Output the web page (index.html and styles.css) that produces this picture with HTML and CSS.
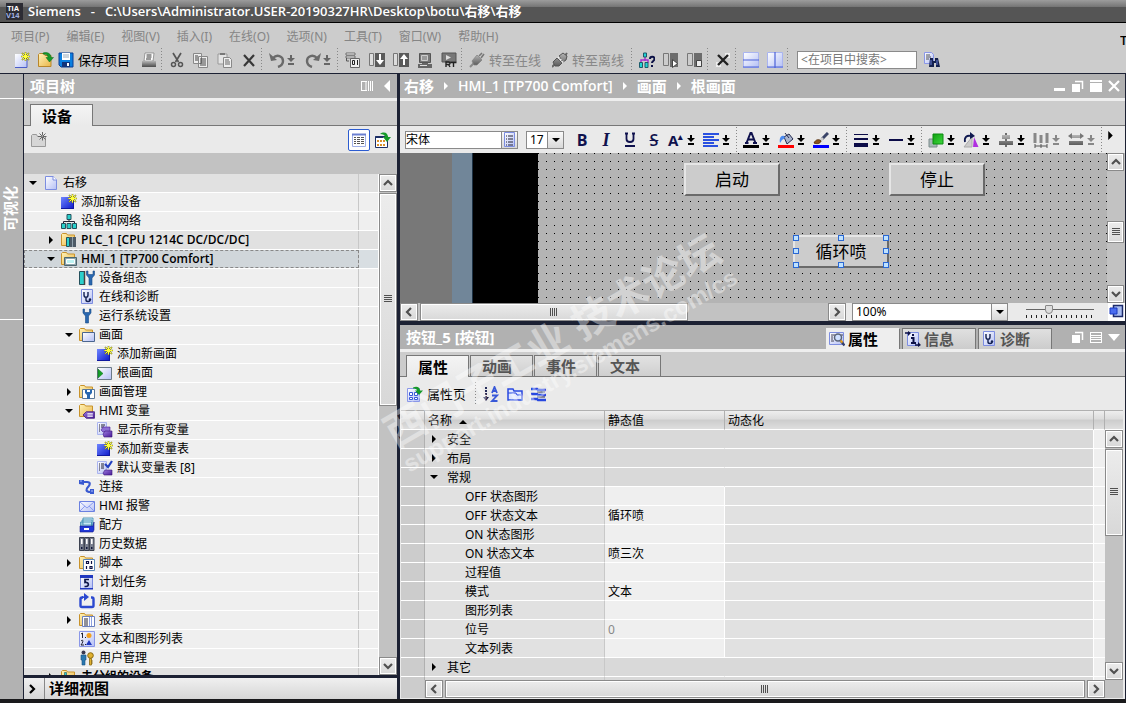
FILE: index.html
```html
<!DOCTYPE html>
<html lang="zh-CN">
<head>
<meta charset="utf-8">
<title>Siemens - 右移</title>
<link rel="stylesheet" href="styles.css">
</head>
<body>
<svg class="sprite" aria-hidden="true">
  <defs>
    <linearGradient id="g-blue" x1="0" y1="0" x2="1" y2="1"><stop offset="0" stop-color="#fff"/><stop offset="1" stop-color="#b4bff5"/></linearGradient>
    <linearGradient id="g-deep" x1="0" y1="0" x2="1" y2="1"><stop offset="0" stop-color="#6f86ff"/><stop offset="1" stop-color="#0a16c8"/></linearGradient>
    <linearGradient id="g-fold" x1="0" y1="0" x2="1" y2="1"><stop offset="0" stop-color="#fff3b8"/><stop offset="1" stop-color="#eab548"/></linearGradient>
    <linearGradient id="g-gray" x1="0" y1="0" x2="0" y2="1"><stop offset="0" stop-color="#b5b5b5"/><stop offset="1" stop-color="#5c5c5c"/></linearGradient>
    <linearGradient id="g-violet" x1="0" y1="0" x2="1" y2="1"><stop offset="0" stop-color="#9a7be0"/><stop offset="1" stop-color="#4a1a96"/></linearGradient>
    <linearGradient id="g-green" x1="0" y1="0" x2="1" y2="1"><stop offset="0" stop-color="#10a010"/><stop offset="1" stop-color="#3fd83f"/></linearGradient>
  </defs>
  <symbol id="star" viewBox="0 0 9 9"><path d="M4.500 0v9M0 4.500h9M1 1l7 7M8 1l-7 7" stroke="#7d7d10" stroke-width="1.600"/><path d="M4.500 .5v8M.5 4.500h8M1.500 1.500l6 6M7.500 1.500l-6 6" stroke="#ffff3c"/></symbol>
  <symbol id="new" viewBox="0 0 16 16"><path d="M1 2h9l3 3v11H1z" fill="url(#g-blue)"/><path d="M13 6v9.500H1" fill="none" stroke="#4a5cc8"/><use href="#star" x="7" y="0" width="9" height="9"/></symbol>
  <symbol id="open" viewBox="0 0 16 16"><path d="M.5 14.500V2.500l1-1h4l1.500 2h6v11z" fill="url(#g-fold)" stroke="#b8862b"/><path d="M5 1c5-1.500 8 1 8 4.500h2.500L11.500 10 8 5.500h2C10 3 8 2 5 2z" fill="#159a28" stroke="#0c6a1a" stroke-width=".5"/></symbol>
  <symbol id="save" viewBox="0 0 16 16"><path d="M1 1h14v14H3l-2-2z" fill="#0b7fe0" stroke="#0a3f96"/><path d="M4 1h8v7H4z" fill="#fff"/><path d="M5 3h6M5 5h6" stroke="#9ab"/><path d="M4 10h8v5H4z" fill="#12337a"/><path d="M9 11h2v3H9z" fill="#fff"/></symbol>
  <symbol id="print" viewBox="0 0 16 16"><path d="M4 1h9l-1 8H3z" fill="#fff" stroke="#777" stroke-width=".7"/><path d="M5.500 3h5M5.500 5h5M5 7h5" stroke="#333"/><path d="M1 9h14v5H1z" fill="url(#g-gray)"/><path d="M1 14.500h14" stroke="#555"/></symbol>
  <symbol id="cut" viewBox="0 0 16 16"><path d="M4 1l5.500 9M12 1L6.500 10" stroke="#555" stroke-width="1.700"/><circle cx="4.500" cy="12.500" r="2" fill="none" stroke="#555" stroke-width="1.500"/><circle cx="11.500" cy="12.500" r="2" fill="none" stroke="#555" stroke-width="1.500"/></symbol>
  <symbol id="copy" viewBox="0 0 16 16"><path d="M.5 1.500h8v10h-8zM5.500 4.500h9v11h-9z" fill="#eee" stroke="#888"/><path d="M2 4h3M2 6h3M2 8h3M7 7h6M7 9h6M7 11h6M7 13h6" stroke="#444"/></symbol>
  <symbol id="paste" viewBox="0 0 16 16"><path d="M1 2h9v10H1z" fill="#e4e4e4" stroke="#999"/><path d="M3 1h5v2H3z" fill="#777"/><path d="M6.500 5.500h6l2 2v8h-8z" fill="#eee" stroke="#888"/><path d="M8 8h4M8 10h5M8 12h5" stroke="#666"/></symbol>
  <symbol id="del" viewBox="0 0 16 16"><path d="M3 3l10 11M13 3L3 14" stroke="#383838" stroke-width="2.200"/></symbol>
  <symbol id="undo" viewBox="0 0 16 16"><path d="M4 6c4-4 10-2 10 3 0 3-2 5-5 6" fill="none" stroke="#6a6a6a" stroke-width="2.400"/><path d="M0 1l2 8 6-1z" fill="#6a6a6a"/></symbol>
  <symbol id="redo" viewBox="0 0 16 16"><path d="M12 6C8 2 2 4 2 9c0 3 2 5 5 6" fill="none" stroke="#6a6a6a" stroke-width="2.400"/><path d="M16 1l-2 8-6-1z" fill="#6a6a6a"/></symbol>
  <symbol id="dn" viewBox="0 0 8 10"><path d="M3 0h2v3h3L4 7 0 3h3zM1 8h6v2H1z" fill="currentColor"/></symbol>
  <symbol id="compile" viewBox="0 0 16 16"><path d="M1 1h9v2H1zM1 4h9v2H1z" fill="#eee" stroke="#555" stroke-width=".8"/><path d="M1.500 6v3H4" stroke="#555" fill="none"/><path d="M5.500 6.500h9v9h-9z" fill="#eee" stroke="#666"/><path d="M7.500 8.500h2v4h-2zM12.500 8v5" fill="none" stroke="#222"/></symbol>
  <symbol id="download" viewBox="0 0 16 16"><path d="M.5 1.500h4v12h-4z" fill="#ddd" stroke="#777"/><path d="M6 1h10v14H6z" fill="#5a5a5a"/><path d="M11 2v7" stroke="#fff" stroke-width="2"/><path d="M7 8h8l-4 5z" fill="#fff"/></symbol>
  <symbol id="upload" viewBox="0 0 16 16"><path d="M.5 1.500h4v12h-4z" fill="#ddd" stroke="#777"/><path d="M6 1h10v14H6z" fill="#5a5a5a"/><path d="M11 13V7" stroke="#fff" stroke-width="2"/><path d="M7 7h8l-4-5z" fill="#fff"/></symbol>
  <symbol id="sim" viewBox="0 0 16 16"><path d="M2.500 1.500h11v9h-11z" fill="#777" stroke="#555"/><path d="M4.500 3.500h6v5h-6z" fill="#999" stroke="#ccc"/><path d="M5 11h6v1h4v4H1v-4h4z" fill="#666"/><path d="M3 13.500h7" stroke="#ddd"/></symbol>
  <symbol id="rt" viewBox="0 0 16 16"><path d="M1 1h14v9H1z" fill="#777" stroke="#555"/><path d="M5 3l5 2.500L5 8z" fill="#ddd"/><path d="M5 15V10h2.500c2 0 2 2.500 0 2.500H5M7.500 12.500L9 15M9.500 10.500h6M12.500 10.500V15" fill="none" stroke="#222" stroke-width="1.400"/></symbol>
  <symbol id="plug" viewBox="0 0 16 16"><path d="M1 15l5-5" stroke="#8a8a8a" stroke-width="2"/><path d="M3 9l5-6 5 5-5 5H5z" fill="url(#g-gray)" stroke="#808080" stroke-width=".7"/><path d="M10 4l3-3M12 6l3-4" stroke="#777" stroke-width="1.600"/></symbol>
  <symbol id="unplug" viewBox="0 0 16 16"><path d="M0 15l4-4M12 5l3-4" stroke="#666" stroke-width="2"/><path d="M1 10l4-4 5 5-3 3H3zM7 4l4-3 4 3-1 4-3 2z" fill="url(#g-gray)" stroke="#555"/><path d="M6 5l5 5" stroke="#eee" stroke-dasharray="1.500 1.500" stroke-width="2"/></symbol>
  <symbol id="access" viewBox="0 0 16 16"><path d="M6 4v5M2 11V8h7v3" fill="none" stroke="#a12fd0" stroke-width="1.400"/><path d="M4.500 1h3v4h-3zM.5 10.500h3v5h-3zM6 10.500h3v5H6z" fill="#1fd3d3" stroke="#1d5a6a"/><path d="M11 7c0-3 4.500-3 4.500 0 0 2-2.500 2-2.500 4M13 13v2" fill="none" stroke="#0c1146" stroke-width="2"/></symbol>
  <symbol id="start" viewBox="0 0 16 16"><path d="M.5 1.500h5v12h-5z" fill="#ccc" stroke="#777"/><path d="M7 1h8v14H7z" fill="#6c6c6c"/><path d="M9.500 7.500l5 4-5 4z" fill="#fff" stroke="#444"/></symbol>
  <symbol id="stop" viewBox="0 0 16 16"><path d="M.5 1.500h5v12h-5z" fill="#ccc" stroke="#777"/><path d="M7 1h8v14H7z" fill="#6c6c6c"/><path d="M9.500 8.500h5v6h-5z" fill="#eee" stroke="#444"/></symbol>
  <symbol id="xref" viewBox="0 0 16 16"><path d="M9.500.5h6v6h-6zM.5 9.500h6v6h-6z" fill="#eee" stroke="#ccc"/><path d="M3 3l10 10M13 3L3 13" stroke="#222" stroke-width="2.400"/></symbol>
  <symbol id="split-h" viewBox="0 0 16 16"><path d="M.5.5h15v15H.5z" fill="url(#g-blue)" stroke="#a9b4f0"/><path d="M0 8h16M0 15h16" stroke="#4c62d8" stroke-width="1.200"/></symbol>
  <symbol id="split-v" viewBox="0 0 16 16"><path d="M.5.5h15v15H.5z" fill="url(#g-blue)" stroke="#a9b4f0"/><path d="M8 0v16M0 15h16" stroke="#4c62d8" stroke-width="1.200"/></symbol>
  <symbol id="find" viewBox="0 0 16 16"><path d="M.5.5h7l2 2v9h-9z" fill="url(#g-blue)" stroke="#8a97e8"/><path d="M2 3h4M2 5h5M2 7h3" stroke="#555"/><path d="M6 6h3v3h2V6h3l2 9h-4v-4h-2v4H5z" fill="#14204e"/><path d="M7 8v5M13 8v5" stroke="#6a80d8"/></symbol>
  <symbol id="folder" viewBox="0 0 16 16"><path d="M.5 13.500V2.500l1-1h4l1 1.500h7v10.500z" fill="url(#g-fold)" stroke="#c8922b"/></symbol>
  <symbol id="folder-new" viewBox="0 0 16 16"><path d="M.5 14.500v-11l1-1h4l1 2h8v10z" fill="#d6d6d6" stroke="#999"/><path d="M11.500 0v9M7 4.500h9M8.500 1.500l6 6M14.500 1.500l-6 6" stroke="#666" stroke-dasharray="3.500 1.500"/></symbol>
  <symbol id="list" viewBox="0 0 16 16"><path d="M1.500 2.500h13v12h-13z" fill="#fff" stroke="#9fb0e8"/><path d="M1 2.500h14" stroke="#6a7fd0" stroke-width="2"/><path d="M3 5.500h2M6 5.500h3M10 5.500h3M3 7.500h2M6 7.500h3M10 7.500h3M3 9.500h2M6 9.500h3M10 9.500h3M3 11.500h2M6 11.500h3M10 11.500h3" stroke="#555"/></symbol>
  <symbol id="export" viewBox="0 0 16 16"><path d="M.5 4.500h12v11H.5z" fill="#fff" stroke="#1d2f66"/><path d="M.5 5h8" stroke="#1d2f66" stroke-width="2"/><path d="M2 8h2v2H2zM5 8h2v2H5zM8 8h2v2H8zM2 12h2v2H2zM5 12h2v2H5zM8 12h2v2H8z" fill="#d9902a"/><path d="M5 2c4-3 8-1 8 3h3l-4 5-4-5h2c0-2-2-3-5-3z" fill="#159a28"/></symbol>
  <symbol id="page" viewBox="0 0 16 16"><path d="M2.500 1.500h8l3 3v10h-11z" fill="url(#g-blue)" stroke="#7c8de0"/><path d="M10 1v4h4" fill="#fff" stroke="#7c8de0"/></symbol>
  <symbol id="add" viewBox="0 0 16 16"><path d="M0 3h13v12H0z" fill="url(#g-deep)"/><path d="M0 14.500h12.500V4" fill="none" stroke="#1018a0"/><use href="#star" x="7" y="0" width="9" height="9"/></symbol>
  <symbol id="net" viewBox="0 0 16 16"><path d="M8 5v4M2.500 11V8.500h11V11" fill="none" stroke="#223"/><path d="M6 1.500h4v5H6zM.5 10.500h4v5h-4zM6 10.500h4v5H6zM11.500 10.500h4v5h-4z" fill="#2ad0cc" stroke="#24505c"/></symbol>
  <symbol id="plc" viewBox="0 0 16 16"><use href="#folder" width="16" height="16"/><path d="M5.500 5.500h3v9h-3z" fill="#2ad0cc" stroke="#24505c"/><path d="M9 5h6v10H9z" fill="#4d5a66"/><path d="M11.500 5v10" stroke="#8fa0ac"/></symbol>
  <symbol id="hmi" viewBox="0 0 16 16"><use href="#folder" width="16" height="16"/><path d="M3.500 6.500h12v8h-12z" fill="#8ba4ac" stroke="#4c6670"/><path d="M5.500 8.500h8v4h-8z" fill="#bff4f4" stroke="#fff"/></symbol>
  <symbol id="wrench" viewBox="0 0 16 16"><path d="M4 1v4l2.500 3v7h3V8L12 5V1h-1.500v3.500h-5V1z" fill="#2a68b0" stroke="#174a88" stroke-width=".6"/></symbol>
  <symbol id="config" viewBox="0 0 16 16"><path d="M.5 1.500h5v13h-5z" fill="#2ad0cc" stroke="#24505c"/><path d="M5.500 1v14" stroke="#444" stroke-width="1.500"/><use href="#wrench" x="3.500" width="16" height="16"/></symbol>
  <symbol id="diag" viewBox="0 0 16 16"><path d="M2.500.5h11v14h-11z" fill="url(#g-blue)" stroke="#7c8de0"/><path d="M5 3v3c0 3 4 3 4 0V3M7 8v3c0 2 4 2 4 0" fill="none" stroke="#122050" stroke-width="1.400"/><circle cx="11" cy="10.500" r="1.200" fill="#122050"/></symbol>
  <symbol id="screens" viewBox="0 0 16 16"><use href="#folder" width="16" height="16"/><path d="M3.500 5.500h12v9h-12z" fill="url(#g-blue)" stroke="#4b6690"/></symbol>
  <symbol id="screen" viewBox="0 0 16 16"><path d="M.5 2.500h14v12H.5z" fill="url(#g-blue)" stroke="#6b7a88"/><path d="M1 4l5 4.500L1 13z" fill="#15a028" stroke="#0c6a1a" stroke-width=".5"/></symbol>
  <symbol id="manage" viewBox="0 0 16 16"><use href="#folder" width="16" height="16"/><path d="M3.500 5.500h12v9h-12z" fill="#fff" stroke="#5b7898"/><path d="M6 6v3l2 2v4h3v-4l2-2V6h-2v2H8V6z" fill="#2a68b0"/></symbol>
  <symbol id="tag" viewBox="0 0 11 7"><path d="M0 3.500L3 .5h7.500v6H3z" fill="url(#g-violet)" stroke="#3a1478" stroke-width=".7"/><path d="M4 2.500h5M4 4.500h5" stroke="#fff"/></symbol>
  <symbol id="tags" viewBox="0 0 16 16"><use href="#folder" width="16" height="16"/><use href="#tag" x="4" y="8" width="12" height="8"/></symbol>
  <symbol id="alltags" viewBox="0 0 16 16"><path d="M.5.5h9v12h-9z" fill="url(#g-blue)" stroke="#aab4f0"/><path d="M2 3h1M4 3h4M2 5h1M4 5h3M2 7h1M2 9h1" stroke="#223"/><path d="M4 8l2-3h7v5H6z" fill="#8c6fd4" stroke="#4a1a96" stroke-width=".6"/><path d="M6 12l2-3h7v6H7z" fill="url(#g-violet)" stroke="#3a1478" stroke-width=".6"/></symbol>
  <symbol id="deftags" viewBox="0 0 16 16"><path d="M.5 1.500h9v12h-9z" fill="url(#g-blue)" stroke="#aab4f0"/><path d="M2 4h1M4 4h3M2 6h1M4 6h3M2 8h1M4 8h3M2 10h1" stroke="#223"/><path d="M8 4l3 3 4-6" fill="none" stroke="#2340c0" stroke-width="2.200"/><path d="M6 13l2-3h7v5H7z" fill="url(#g-violet)" stroke="#3a1478" stroke-width=".6"/></symbol>
  <symbol id="link" viewBox="0 0 16 16"><path d="M4 3h4c4 0 3 3 1 5s-3 5 3 5" fill="none" stroke="#3a5ad0" stroke-width="2.200"/><path d="M0 1h5v5l-5-1zM11 10h4v5h-4z" fill="#3a5ad0"/><path d="M1 2h2M12 12h2" stroke="#a8bcff"/></symbol>
  <symbol id="mail" viewBox="0 0 16 16"><path d="M.5 3.500h15v10H.5z" fill="url(#g-blue)" stroke="#6a80e0"/><path d="M1 4l7 6 7-6M1 13l5-5M15 13l-5-5" fill="none" stroke="#8a9cf0"/></symbol>
  <symbol id="recipe" viewBox="0 0 16 16"><path d="M4 1h10v7H4zM3 3h10v7H3zM1.500 5h11v5h-11z" fill="#c8e8f4" stroke="#3a8ab0" stroke-width=".8"/><path d="M1 9h13l1-4v8l-1 2H1z" fill="#2038d8" stroke="#10188a" stroke-width=".6"/><path d="M5 11h5v2H5z" fill="#fff"/></symbol>
  <symbol id="history" viewBox="0 0 16 16"><path d="M.5 1.500h4.500v13H.5zM5.500 1.500H10v13H5.500zM10.500 1.500h4.500v13h-4.500z" fill="#7a8090" stroke="#3c4250"/><path d="M2.800 3v5M7.800 3v5M12.800 3v5" stroke="#fff" stroke-width="1.600"/><path d="M2 11h1.500v2H2zM7 11h1.500v2H7zM12 11h1.500v2H12z" fill="#10183c"/></symbol>
  <symbol id="script" viewBox="0 0 16 16"><use href="#folder" width="16" height="16"/><path d="M4.500 4.500h11v11h-11z" fill="#fff" stroke="#5b88b8"/><path d="M7.500 6.500h2v2h-2zM12.500 6v3M7.500 11v3M11 11.500h2v2h-2z" fill="none" stroke="#0c1146" stroke-width="1.200"/></symbol>
  <symbol id="task" viewBox="0 0 16 16"><path d="M1.500 1.500h12v13h-12z" fill="url(#g-blue)" stroke="#7c8de0"/><path d="M1 1h13v3H1zM1 14h13v1.500H1z" fill="#2038c0"/><path d="M10 5.500H6v3c4-1 4.500 4 1 4H5.500" fill="none" stroke="#10184a" stroke-width="1.700"/></symbol>
  <symbol id="cycle" viewBox="0 0 16 16"><path d="M4 4.500H3c-1 0-1.500.5-1.500 1.500v6.500c0 1 .5 1.500 1.500 1.500h10c1 0 1.500-.5 1.500-1.500V6c0-1-.5-1.500-1.500-1.500h-1" fill="none" stroke="#2a48d0" stroke-width="2.400"/><path d="M5 3.500V0l5 4-5 4V5H3V3z" fill="#2a48d0"/></symbol>
  <symbol id="report" viewBox="0 0 16 16"><use href="#folder" width="16" height="16"/><path d="M3.500 4.500h12v10h-12z" fill="#fff" stroke="#6a80c0"/><path d="M5 7h4M5 9h4M5 11h4M5 13h4" stroke="#223"/><path d="M10.500 5v9M12.500 5v9" stroke="#8ea0e0"/></symbol>
  <symbol id="textlist" viewBox="0 0 16 16"><path d="M.5.5h15v15H.5z" fill="url(#g-blue)" stroke="#8a97e8"/><path d="M2 3l1.500-1v5M2 10c2-2 3 0 0 4h3" fill="none" stroke="#223"/><path d="M6 6h1v1H6zM6 13h1v1H6z" fill="#223"/><circle cx="10" cy="4.500" r="2.500" fill="#f2a020"/><path d="M7 14l3-5 3 5z" fill="#2038c0"/></symbol>
  <symbol id="user" viewBox="0 0 16 16"><circle cx="4.500" cy="2.500" r="2" fill="#3a3a50"/><path d="M2 5h5v5H6v5H3v-5H2z" fill="#2a78b0" stroke="#1a5080" stroke-width=".6"/><circle cx="11.500" cy="5.500" r="2.800" fill="#e0b030" stroke="#8a6a10"/><path d="M10.500 8.500h2V15h-2zM12 11h2M12 13h2" fill="#e0b030" stroke="#8a6a10" stroke-width=".8"/></symbol>
  <symbol id="ungrouped" viewBox="0 0 16 16"><use href="#folder" width="16" height="16"/><path d="M3.500 3.500h2v9h-2z" fill="#2ad0cc" stroke="#24505c" stroke-width=".6"/></symbol>
  <symbol id="fmt-u" viewBox="0 0 16 16"><path d="M4.500 1v6c0 4 7 4 7 0V1M3 1.500h3M10 1.500h3M3 14h10" fill="none" stroke="#10124e" stroke-width="1.800"/></symbol>
  <symbol id="fmt-al" viewBox="0 0 16 16"><path d="M0 2h16M0 5h11M0 8h16M0 11h11M0 14h15" stroke="#2a50e0" stroke-width="2"/></symbol>
  <symbol id="fmt-color" viewBox="0 0 16 16"><path d="M3.500 11L7.500 1h1l4 10M4.500 7.500h7M2 11H5.500M10 11h4" fill="none" stroke="#10124e" stroke-width="2"/><path d="M0 13h16v3H0z"/></symbol>
  <symbol id="fmt-fill" viewBox="0 0 16 16"><path d="M6 5l5-3 4 5-6 5z" fill="#aab4cc" stroke="#222a50"/><path d="M7 1l4 5" stroke="#222a50"/><path d="M6 4C3 3 1 6 2 11l2-3 3-2z" fill="#4a8af0"/><path d="M0 13h16v3H0z" fill="#f00"/></symbol>
  <symbol id="fmt-brush" viewBox="0 0 16 16"><path d="M15 1L9 7" stroke="#3a4468" stroke-width="3"/><path d="M9 5l2 2-3 3-2-2z" fill="#ccc"/><path d="M1 11c2-4 5-4 7-2-1 3-4 3-7 2z" fill="#8a5420" stroke="#5c3410"/><path d="M0 13h16v3H0z" fill="#00f"/></symbol>
  <symbol id="fmt-lines" viewBox="0 0 16 16"><path d="M1 2.500h14" stroke="#0c0c48"/><path d="M1 7h14" stroke="#0c0c48" stroke-width="2"/><path d="M1 13h14" stroke="#0c0c48" stroke-width="4"/></symbol>
  <symbol id="fmt-line" viewBox="0 0 16 16"><path d="M1 8h14" stroke="#0c0c48" stroke-width="2"/></symbol>
  <symbol id="fmt-order" viewBox="0 0 16 16"><path d="M1 7h8v8H1z" fill="#a8b8b8" stroke="#7c8c8c"/><path d="M5 2h10v10H5z" fill="url(#g-green)" stroke="#0a8a10"/></symbol>
  <symbol id="fmt-rot" viewBox="0 0 16 16"><path d="M9 5v10H1z" fill="#ccc" stroke="#aaa"/><path d="M11 5l4.500 10H10z" fill="#b030e0"/><path d="M2 10C1 5 4 3 8 4" fill="none" stroke="#101a50" stroke-width="1.800"/><path d="M7 0l5 4-5 3z" fill="#101a50"/></symbol>
  <symbol id="fmt-align2" viewBox="0 0 16 16"><path d="M8 1v14" stroke="#444" stroke-width="1.500"/><path d="M4 3h8v4H4zM1 9h14v4H1z" fill="url(#g-gray)"/></symbol>
  <symbol id="fmt-dist" viewBox="0 0 16 16"><path d="M2 1v10M8 3v8M14 1v10" stroke="#888" stroke-width="3"/><path d="M2 14h12M2 12v4M8 12v4M14 12v4" stroke="#555"/></symbol>
  <symbol id="fmt-size" viewBox="0 0 16 16"><path d="M0 4l4-3v6zM16 4l-4-3v6z" fill="#777"/><path d="M4 3h8v3H4zM1 9h14v4H1z" fill="url(#g-gray)"/></symbol>
  <symbol id="combo" viewBox="0 0 16 16"><path d="M2.500.5h10v14h-10z" fill="url(#g-blue)" stroke="#7c8de0"/><path d="M4 4h1M6 4h5M4 7h1M6 7h5M4 10h1M6 10h5M4 13h1M6 13h5" stroke="#223"/></symbol>
  <symbol id="page-exp" viewBox="0 0 16 16"><path d="M.5 2.500h12v13H.5z" fill="url(#g-blue)" stroke="#8a97e8"/><path d="M2.500 6.500h3v3h-3zM7.500 6.500h3v3h-3zM2.500 11.500h3v2h-3zM7.500 11.500h3v2h-3z" fill="#fff" stroke="#3858d8"/><path d="M6 1.500c4-2 7 0 7 3h3l-4 4.500-4-4.500h2c0-1.500-2-2-4-2z" fill="#159a28"/></symbol>
  <symbol id="sort" viewBox="0 0 16 16"><path d="M3 1v11" stroke="#10184a" stroke-width="1.800" stroke-dasharray="2 1"/><path d="M0 11h6l-3 4z" fill="#10184a"/><path d="M9 7l2.500-6L14 7M10 5h3M9 9.500h5L9 15h5.500" fill="none" stroke="#3858d8" stroke-width="1.800"/></symbol>
  <symbol id="bfolder" viewBox="0 0 16 16"><path d="M1 14V3h5l1 2h8v9z" fill="#dfe6ff" stroke="#2848e0" stroke-width="1.500"/><path d="M1 7h8l1 2h5" fill="none" stroke="#2848e0"/></symbol>
  <symbol id="bgroup" viewBox="0 0 16 16"><path d="M0 3h6l1 1h8M0 8h6l1 1h8M0 13h6l1 1h8" fill="none" stroke="#2848e0" stroke-width="2.400"/><path d="M6 6h8M6 11h8" stroke="#222a50"/></symbol>
  <symbol id="prop" viewBox="0 0 16 16"><path d="M.5 1.500h14v12H.5z" fill="url(#g-blue)" stroke="#7c8de0"/><path d="M2 4h4M2 6h2M2 8h2M2 10h3M12 4h2" stroke="#445"/><circle cx="9" cy="6.500" r="3.500" fill="#cfe0ff" stroke="#5a6478" stroke-width="1.500"/><path d="M11.500 9.500l4 5" stroke="#34406a" stroke-width="2.400"/><path d="M11.500 9.500l2 2" stroke="#e8a020" stroke-width="2"/></symbol>
  <symbol id="info" viewBox="0 0 16 16"><path d="M2.500 1.500h11v13h-11z" fill="url(#g-blue)" stroke="#7c8de0"/><path d="M7 4h2M6 7h2.500v5M6 12h5" fill="none" stroke="#0c1146" stroke-width="2"/><path d="M0 2h4M10 14h4" stroke="#0c1146" stroke-width="1.600"/><path d="M3 0l3 2-3 3zM13 11l3 3-3 2z" fill="#0c1146"/></symbol>
  <symbol id="overview" viewBox="0 0 16 16"><path d="M5.500 1.500h9v11h-9z" fill="#a8bcf0" stroke="#1c2a6a" stroke-width="1.500"/><path d="M2 4h7v6H2z" fill="#4a6cf0" stroke="#1838c0"/></symbol>
  <symbol id="w-min" viewBox="0 0 12 12"><path d="M0 8h11v3H0z" fill="#fff"/></symbol>
  <symbol id="w-rest" viewBox="0 0 12 12"><path d="M0 4h8v8H0z" fill="#fff"/><path d="M3 1.500h7.500V9" fill="none" stroke="#fff" stroke-width="1.500"/></symbol>
  <symbol id="w-max" viewBox="0 0 12 12"><path d="M0 0h12v2H0zM0 3h12v9H0z" fill="#fff"/></symbol>
  <symbol id="w-x" viewBox="0 0 12 12"><path d="M1 1l10 10M11 1L1 11" stroke="#fff" stroke-width="2.200"/></symbol>
  <symbol id="w-list" viewBox="0 0 12 12"><path d="M0 1.500h12M.5 1v11M11.500 1v11M0 4.500h12M0 6.500h12M0 8.500h12M0 11.500h12" stroke="#fff"/></symbol>
  <symbol id="w-dn" viewBox="0 0 12 12"><path d="M0 3h12L6 10z" fill="#fff"/></symbol>
  <symbol id="w-cols" viewBox="0 0 12 12"><path d="M.5 1v10M0 1.500h6M0 10.500h6M5 1v10M7.500 1v10M9.500 1v10M11.500 1v10" stroke="#fff"/></symbol>
  <symbol id="w-left" viewBox="0 0 12 12"><path d="M9 0v12L3 6z" fill="#fff"/></symbol>
  <symbol id="t-right" viewBox="0 0 8 8"><path d="M2 0l4 4-4 4z" fill="currentColor"/></symbol>
  <symbol id="t-down" viewBox="0 0 8 8"><path d="M0 2h8L4 6z" fill="currentColor"/></symbol>
  <symbol id="c-up" viewBox="0 0 10 10"><path d="M1 7l4-4 4 4" fill="none" stroke="#505050" stroke-width="2.200"/></symbol>
  <symbol id="c-down" viewBox="0 0 10 10"><path d="M1 3l4 4 4-4" fill="none" stroke="#505050" stroke-width="2.200"/></symbol>
  <symbol id="c-left" viewBox="0 0 10 10"><path d="M7 1L3 5l4 4" fill="none" stroke="#505050" stroke-width="2.200"/></symbol>
  <symbol id="c-right" viewBox="0 0 10 10"><path d="M3 1l4 4-4 4" fill="none" stroke="currentColor" stroke-width="2.200"/></symbol>
  <symbol id="grip" viewBox="0 0 8 8"><path d="M0 .5h8M0 2.500h8M0 4.500h8M0 6.500h8" stroke="#505050"/></symbol>
  <symbol id="grip-v" viewBox="0 0 8 8"><path d="M.5 0v8M2.500 0v8M4.500 0v8M6.500 0v8" stroke="#505050"/></symbol>
</svg>

<div class="app">
  <header class="titlebar">
    <svg class="logo" viewBox="0 0 18 18" aria-hidden="true"><path d="M0 0h18v18H0z" fill="#2c2c34"/><text x="1" y="8">TIA</text><text class="ver" x="0" y="16">V14</text></svg>
    <span class="app-name">Siemens</span><span class="dash">-</span><span>C:\Users\Administrator.USER-20190327HR\Desktop\botu\右移\右移</span>
  </header>

  <nav class="menubar">
    <button>项目(P)</button><button>编辑(E)</button><button>视图(V)</button><button>插入(I)</button><button>在线(O)</button><button>选项(N)</button><button>工具(T)</button><button>窗口(W)</button><button>帮助(H)</button>
    <span class="brand">T</span>
  </nav>

  <div class="toolbar main-tools">
    <button class="tool" aria-label="新建"><svg><use href="#new"/></svg></button>
    <button class="tool" aria-label="打开"><svg><use href="#open"/></svg></button>
    <button class="tool labelled near"><svg><use href="#save"/></svg>保存项目</button>
    <button class="tool" aria-label="打印"><svg><use href="#print"/></svg></button>
    <i class="sep"></i>
    <button class="tool" aria-label="剪切"><svg><use href="#cut"/></svg></button>
    <button class="tool" aria-label="复制"><svg><use href="#copy"/></svg></button>
    <button class="tool" aria-label="粘贴"><svg><use href="#paste"/></svg></button>
    <button class="tool" aria-label="删除"><svg><use href="#del"/></svg></button>
    <i class="sep"></i>
    <button class="tool split dim" aria-label="撤销"><svg><use href="#undo"/></svg><svg class="dn"><use href="#dn"/></svg></button>
    <button class="tool split dim" aria-label="重做"><svg><use href="#redo"/></svg><svg class="dn"><use href="#dn"/></svg></button>
    <i class="sep"></i>
    <button class="tool" aria-label="编译"><svg><use href="#compile"/></svg></button>
    <button class="tool" aria-label="下载"><svg><use href="#download"/></svg></button>
    <button class="tool" aria-label="上传"><svg><use href="#upload"/></svg></button>
    <button class="tool" aria-label="仿真"><svg><use href="#sim"/></svg></button>
    <button class="tool" aria-label="运行系统"><svg><use href="#rt"/></svg></button>
    <i class="sep"></i>
    <button class="tool labelled off"><svg><use href="#plug"/></svg>转至在线</button>
    <button class="tool labelled off"><svg><use href="#unplug"/></svg>转至离线</button>
    <i class="sep"></i>
    <button class="tool" aria-label="可访问设备"><svg><use href="#access"/></svg></button>
    <button class="tool" aria-label="启动 CPU"><svg><use href="#start"/></svg></button>
    <button class="tool" aria-label="停止 CPU"><svg><use href="#stop"/></svg></button>
    <i class="sep"></i>
    <button class="tool" aria-label="交叉引用"><svg><use href="#xref"/></svg></button>
    <i class="sep"></i>
    <button class="tool" aria-label="水平拆分"><svg><use href="#split-h"/></svg></button>
    <button class="tool" aria-label="垂直拆分"><svg><use href="#split-v"/></svg></button>
    <i class="sep"></i>
    <input class="search" type="text" aria-label="搜索" placeholder="&lt;在项目中搜索&gt;">
    <button class="tool" aria-label="查找"><svg><use href="#find"/></svg></button>
  </div>

  <main class="workspace">
    <aside class="rail"><div class="rail-cap"></div><button class="rail-tab"><span>可视化</span></button></aside>

    <section class="project">
      <div class="pane-head"><h2>项目树</h2><div class="pane-tools"><button aria-label="列"><svg><use href="#w-cols"/></svg></button><button aria-label="折叠"><svg><use href="#w-left"/></svg></button></div></div>
      <div class="tabs"><button class="tab active">设备</button></div>
      <div class="toolbar tree-tools">
        <button class="tool" aria-label="新建组"><svg><use href="#folder-new"/></svg></button>
        <button class="tool framed push" aria-label="列表"><svg><use href="#list"/></svg></button>
        <button class="tool" aria-label="导出"><svg><use href="#export"/></svg></button>
      </div>
      <div class="tree-gap"></div>
      <div class="tree-area">
        <ul class="tree">
          <li class="l0 shade"><span><b><svg><use href="#t-down"/></svg></b><svg><use href="#page"/></svg>右移</span></li>
          <li class="l1"><span><b></b><svg><use href="#add"/></svg>添加新设备</span></li>
          <li class="l1"><span><b></b><svg><use href="#net"/></svg>设备和网络</span></li>
          <li class="l1 shade strong"><span><b><svg><use href="#t-right"/></svg></b><svg><use href="#plc"/></svg>PLC_1 [CPU 1214C DC/DC/DC]</span></li>
          <li class="l1 selected strong"><span><b><svg><use href="#t-down"/></svg></b><svg><use href="#hmi"/></svg>HMI_1 [TP700 Comfort]</span></li>
          <li class="l2"><span><b></b><svg><use href="#config"/></svg>设备组态</span></li>
          <li class="l2"><span><b></b><svg><use href="#diag"/></svg>在线和诊断</span></li>
          <li class="l2"><span><b></b><svg><use href="#wrench"/></svg>运行系统设置</span></li>
          <li class="l2"><span><b><svg><use href="#t-down"/></svg></b><svg><use href="#screens"/></svg>画面</span></li>
          <li class="l3"><span><b></b><svg><use href="#add"/></svg>添加新画面</span></li>
          <li class="l3"><span><b></b><svg><use href="#screen"/></svg>根画面</span></li>
          <li class="l2"><span><b><svg><use href="#t-right"/></svg></b><svg><use href="#manage"/></svg>画面管理</span></li>
          <li class="l2"><span><b><svg><use href="#t-down"/></svg></b><svg><use href="#tags"/></svg>HMI 变量</span></li>
          <li class="l3"><span><b></b><svg><use href="#alltags"/></svg>显示所有变量</span></li>
          <li class="l3"><span><b></b><svg><use href="#add"/></svg>添加新变量表</span></li>
          <li class="l3"><span><b></b><svg><use href="#deftags"/></svg>默认变量表 [8]</span></li>
          <li class="l2"><span><b></b><svg><use href="#link"/></svg>连接</span></li>
          <li class="l2"><span><b></b><svg><use href="#mail"/></svg>HMI 报警</span></li>
          <li class="l2"><span><b></b><svg><use href="#recipe"/></svg>配方</span></li>
          <li class="l2"><span><b></b><svg><use href="#history"/></svg>历史数据</span></li>
          <li class="l2"><span><b><svg><use href="#t-right"/></svg></b><svg><use href="#script"/></svg>脚本</span></li>
          <li class="l2"><span><b></b><svg><use href="#task"/></svg>计划任务</span></li>
          <li class="l2"><span><b></b><svg><use href="#cycle"/></svg>周期</span></li>
          <li class="l2"><span><b><svg><use href="#t-right"/></svg></b><svg><use href="#report"/></svg>报表</span></li>
          <li class="l2"><span><b></b><svg><use href="#textlist"/></svg>文本和图形列表</span></li>
          <li class="l2"><span><b></b><svg><use href="#user"/></svg>用户管理</span></li>
          <li class="l1 shade strong"><span><b><svg><use href="#t-right"/></svg></b><svg><use href="#ungrouped"/></svg>未分组的设备</span></li>
        </ul>
        <div class="scroll v tree-scroll">
          <button aria-label="向上"><svg><use href="#c-up"/></svg></button>
          <div class="track"><div class="thumb"><svg><use href="#grip"/></svg></div></div>
          <button aria-label="向下"><svg><use href="#c-down"/></svg></button>
        </div>
      </div>
      <div class="details"><button aria-label="展开"><svg><use href="#c-right"/></svg></button><h2>详细视图</h2></div>
    </section>

    <div class="right">
      <section class="editor">
        <div class="pane-head">
          <div class="crumbs"><span>右移</span><svg><use href="#t-right"/></svg><span class="latin">HMI_1 [TP700 Comfort]</span><svg><use href="#t-right"/></svg><span>画面</span><svg><use href="#t-right"/></svg><span>根画面</span></div>
          <div class="pane-tools"><button aria-label="最小化"><svg><use href="#w-min"/></svg></button><button aria-label="还原"><svg><use href="#w-rest"/></svg></button><button aria-label="最大化"><svg><use href="#w-max"/></svg></button><button aria-label="关闭"><svg><use href="#w-x"/></svg></button></div>
        </div>
        <div class="tabs"></div>
        <div class="toolbar format">
          <div class="combo font-combo"><input type="text" value="宋体" aria-label="字体"><button aria-label="选择字体"><svg><use href="#combo"/></svg></button></div>
          <div class="combo size-combo"><select aria-label="字号"><option>17</option></select><span class="drop"><svg><use href="#t-down"/></svg></span></div>
          <button class="letter">B</button><button class="letter italic">I</button><button class="letter" aria-label="下划线"><svg><use href="#fmt-u"/></svg></button><button class="letter strike">S</button>
          <button class="fmt" aria-label="字体大小"><span class="grow">A<sup>▴</sup></span><svg class="dn"><use href="#dn"/></svg></button>
          <button class="fmt" aria-label="对齐"><svg><use href="#fmt-al"/></svg><svg class="dn"><use href="#dn"/></svg></button>
          <i class="sep"></i>
          <button class="fmt" aria-label="文本颜色"><svg><use href="#fmt-color"/></svg><svg class="dn"><use href="#dn"/></svg></button>
          <button class="fmt" aria-label="填充颜色"><svg><use href="#fmt-fill"/></svg><svg class="dn"><use href="#dn"/></svg></button>
          <button class="fmt" aria-label="线条颜色"><svg><use href="#fmt-brush"/></svg><svg class="dn"><use href="#dn"/></svg></button>
          <i class="sep"></i>
          <button class="fmt" aria-label="线宽"><svg><use href="#fmt-lines"/></svg><svg class="dn"><use href="#dn"/></svg></button>
          <button class="fmt" aria-label="线型"><svg><use href="#fmt-line"/></svg><svg class="dn"><use href="#dn"/></svg></button>
          <i class="sep"></i>
          <button class="fmt" aria-label="层次"><svg><use href="#fmt-order"/></svg><svg class="dn"><use href="#dn"/></svg></button>
          <button class="fmt" aria-label="旋转"><svg><use href="#fmt-rot"/></svg><svg class="dn"><use href="#dn"/></svg></button>
          <button class="fmt" aria-label="居中"><svg><use href="#fmt-align2"/></svg><svg class="dn"><use href="#dn"/></svg></button>
          <button class="fmt faint" aria-label="分布"><svg><use href="#fmt-dist"/></svg><svg class="dn"><use href="#dn"/></svg></button>
          <button class="fmt faint" aria-label="尺寸"><svg><use href="#fmt-size"/></svg><svg class="dn"><use href="#dn"/></svg></button>
          <i class="sep"></i>
          <button class="more" aria-label="更多"><svg><use href="#t-right"/></svg></button>
        </div>
        <div class="canvas-area">
          <div class="canvas">
            <div class="band band-gray"></div><div class="band band-blue"></div><div class="band band-black"></div>
            <div class="sheet">
              <button class="hmi-btn start">启动</button>
              <button class="hmi-btn halt">停止</button>
              <button class="hmi-btn spray">循环喷<i class="h nw"></i><i class="h n"></i><i class="h ne"></i><i class="h w"></i><i class="h e"></i><i class="h sw"></i><i class="h s"></i><i class="h se"></i></button>
            </div>
          </div>
          <div class="scroll v canvas-scroll">
            <button aria-label="向上"><svg><use href="#c-up"/></svg></button>
            <div class="track"><div class="thumb"><svg><use href="#grip"/></svg></div></div>
            <button aria-label="向下"><svg><use href="#c-down"/></svg></button>
          </div>
        </div>
        <div class="canvas-foot">
          <div class="scroll hz">
            <button aria-label="向左"><svg><use href="#c-left"/></svg></button>
            <div class="track"><div class="thumb"><svg><use href="#grip-v"/></svg></div></div>
            <button class="mid" aria-label="向右"><svg><use href="#c-right"/></svg></button>
          </div>
          <div class="combo zoom-combo"><select aria-label="缩放"><option>100%</option></select><span class="drop"><svg><use href="#t-down"/></svg></span></div>
          <div class="zoom-slide"><input type="range" min="0" max="100" value="32" aria-label="缩放滑块"><div class="ticks"></div></div>
          <button class="overview" aria-label="总览"><svg><use href="#overview"/></svg></button>
        </div>
      </section>

      <div class="splitter"></div>

      <section class="inspector">
        <div class="pane-head">
          <h2>按钮_5 [按钮]</h2>
          <div class="head-tabs"><button class="head-tab active"><svg><use href="#prop"/></svg>属性</button><button class="head-tab"><svg><use href="#info"/></svg>信息</button><button class="head-tab"><svg><use href="#diag"/></svg>诊断</button></div>
          <div class="pane-tools"><button aria-label="还原"><svg><use href="#w-rest"/></svg></button><button aria-label="停靠"><svg><use href="#w-list"/></svg></button><button aria-label="收起"><svg><use href="#w-dn"/></svg></button></div>
        </div>
        <div class="tabs"><button class="tab active">属性</button><button class="tab">动画</button><button class="tab">事件</button><button class="tab">文本</button></div>
        <div class="toolbar prop-tools">
          <button class="tool labelled"><svg><use href="#page-exp"/></svg>属性页</button>
          <i class="sep"></i>
          <button class="tool" aria-label="排序"><svg><use href="#sort"/></svg></button>
          <button class="tool" aria-label="类别"><svg><use href="#bfolder"/></svg></button>
          <button class="tool" aria-label="分组"><svg><use href="#bgroup"/></svg></button>
        </div>
        <div class="grid-area">
          <div class="grid-main">
            <div class="grid-clip">
              <table class="props">
                <colgroup><col class="c-gut"><col class="c-name"><col class="c-stat"><col><col class="c-end"></colgroup>
                <thead><tr><th></th><th>名称 <svg><path d="M0 7h8L4 3z"/></svg></th><th>静态值</th><th>动态化</th><th></th></tr></thead>
                <tbody>
                  <tr class="group"><td></td><td><svg><use href="#t-right"/></svg>安全</td><td></td><td></td><td></td></tr>
                  <tr class="group"><td></td><td><svg><use href="#t-right"/></svg>布局</td><td></td><td></td><td></td></tr>
                  <tr class="group"><td></td><td><svg><use href="#t-down"/></svg>常规</td><td></td><td></td><td></td></tr>
                  <tr><td></td><td>OFF 状态图形</td><td></td><td></td><td></td></tr>
                  <tr><td></td><td>OFF 状态文本</td><td>循环喷</td><td></td><td></td></tr>
                  <tr><td></td><td>ON 状态图形</td><td></td><td></td><td></td></tr>
                  <tr><td></td><td>ON 状态文本</td><td>喷三次</td><td></td><td></td></tr>
                  <tr><td></td><td>过程值</td><td></td><td></td><td></td></tr>
                  <tr><td></td><td>模式</td><td>文本</td><td></td><td></td></tr>
                  <tr><td></td><td>图形列表</td><td></td><td></td><td></td></tr>
                  <tr><td></td><td>位号</td><td class="muted">0</td><td></td><td></td></tr>
                  <tr><td></td><td>文本列表</td><td></td><td></td><td></td></tr>
                  <tr class="group"><td></td><td><svg><use href="#t-right"/></svg>其它</td><td></td><td></td><td></td></tr>
                  <tr class="group"><td></td><td></td><td></td><td></td><td></td></tr>
                </tbody>
              </table>
            </div>
            <div class="scroll hz grid-hz">
              <button aria-label="向左"><svg><use href="#c-left"/></svg></button>
              <div class="track"><div class="thumb"><svg><use href="#grip-v"/></svg></div></div>
              <button class="mid" aria-label="向右"><svg><use href="#c-right"/></svg></button>
            </div>
          </div>
          <div class="grid-side">
            <div class="cap"></div>
            <div class="scroll v">
              <button aria-label="向上"><svg><use href="#c-up"/></svg></button>
              <div class="track"><div class="thumb"><svg><use href="#grip"/></svg></div></div>
              <button aria-label="向下"><svg><use href="#c-down"/></svg></button>
            </div>
            <div class="corner"></div>
          </div>
        </div>
      </section>
    </div>
  </main>

  <div class="watermark"><div class="wm-name">西门子工业 技术论坛</div><div class="wm-site">support.industry.siemens.com/cs</div></div>
</div>
</body>
</html>
```

FILE: styles.css
```css
* { box-sizing: border-box; }

body {
  margin: 0;
  font: 12px/16px "Noto Sans", "Noto Sans CJK SC", sans-serif;
  color: #000;
  background: #1a1a1c;
}

button, input, select {
  font: inherit;
  color: inherit;
  margin: 0;
  padding: 0;
  border: 0;
  background: none;
  border-radius: 0;
}

button { white-space: nowrap; }
svg { display: block; flex: none; width: 16px; height: 16px; }
h2 { margin: 0; font-size: 15px; line-height: 20px; font-weight: 700; white-space: nowrap; }
.sprite { position: absolute; width: 0; height: 0; }

.app {
  position: relative;
  display: flex;
  flex-direction: column;
  height: 100vh;
  overflow: hidden;
  border-bottom: 4px solid #1a1a1c;
}

/* Title, menu and main toolbar */
.titlebar {
  display: flex;
  align-items: center;
  flex: none;
  height: 23px;
  padding-left: 6px;
  border-bottom: 1px solid #000;
  background: linear-gradient(#9c9c9c, #747474 7px, #555 7px);
  color: #fff;
  font-family: "Open Sans", "Noto Sans CJK SC", sans-serif;
  font-size: 13px;
  font-weight: 600;
  white-space: nowrap;
}
.logo { width: 17px; height: 17px; margin-right: 5px; }
.logo text { font: 700 8px "Liberation Sans", sans-serif; fill: #fff; }
.logo .ver { fill: #a8b8e8; }
.dash { padding: 0 10px; }

.menubar {
  display: flex;
  align-items: center;
  flex: none;
  gap: 17px;
  height: 25px;
  padding: 3px 0 0 11px;
  background: #ccc;
  color: #858585;
  overflow: hidden;
}
.brand { align-self: flex-end; margin-left: auto; width: 6px; overflow: hidden; color: #000; font: 600 13px/16px "Open Sans", sans-serif; }

.toolbar { display: flex; align-items: center; flex: none; }
.main-tools { height: 26px; padding: 0 0 2px 10px; background: #ccc; border-bottom: 1px solid #1c2133; overflow: hidden; }
.tool { display: flex; align-items: center; flex: none; height: 22px; padding: 0 4px; }
.labelled { gap: 4px; margin-right: 3px; font-size: 13px; }
.near { padding-left: 0; }
.off { color: #888; }
.sep { flex: none; width: 4px; height: 23px; padding: 0; background: repeating-linear-gradient(#888 0 1px, transparent 1px 3px) 0 0 / 1px 100% no-repeat; }
.dn { width: 8px; height: 10px; }
.split { gap: 2px; padding-right: 6px; }
.dim { color: #666; }
.search { width: 120px; height: 18px; margin: 0 3px 0 6px; padding: 0 3px; border: 1px solid #8a8a8a; background: #fff; }
.search::placeholder { color: #777; opacity: 1; }

/* Workspace */
.workspace { display: flex; flex: 1; min-height: 0; background: #1c2133; }
.rail { flex: none; width: 24px; background: #b2b2b2; border-right: 1px solid #1c2133; color: #fff; }
.rail-cap { height: 25px; border-bottom: 1px solid #fff; }
.rail-tab { display: flex; align-items: center; justify-content: center; width: 23px; height: 221px; padding-right: 3px; border-bottom: 1px solid #fff; font-size: 15px; font-weight: 700; }
.rail-tab span { writing-mode: vertical-rl; text-orientation: sideways; transform: rotate(180deg); }

.project { display: flex; flex-direction: column; flex: none; width: 373px; }
.right { flex: 1; min-width: 0; margin-left: 3px; padding-right: 1px; display: grid; grid-template-rows: minmax(0, 247fr) 4px minmax(0, 374fr); }
.editor, .inspector { display: flex; flex-direction: column; min-width: 0; min-height: 0; }

.pane-head {
  display: flex;
  align-items: center;
  flex: none;
  height: 27px;
  padding-left: 6px;
  background: #b1b1b1;
  border-bottom: 3px solid #eee;
  color: #fff;
}
.pane-tools { display: flex; gap: 6px; margin-left: auto; padding-right: 5px; }
.pane-tools svg { width: 12px; height: 12px; }
.project .pane-tools { gap: 8px; padding-right: 4px; }
.inspector .pane-tools { margin-left: 20px; }
.crumbs { display: flex; align-items: center; font-size: 15px; font-weight: 700; white-space: nowrap; }
.editor .pane-head { padding-left: 4px; }
.crumbs svg { width: 8px; height: 8px; margin: 0 8px; }
.latin { font-family: "Open Sans", sans-serif; font-size: 14px; font-weight: 600; }

.tabs { display: flex; align-items: flex-end; gap: 1px; flex: none; height: 25px; padding-left: 6px; background: #ccc; border-bottom: 1px solid #777; }
.tab {
  width: 63px;
  height: 21px;
  padding-left: 11px;
  text-align: left;
  font-size: 15px;
  line-height: 18px;
  font-weight: 700;
  color: #555;
  border: 1px solid #777;
  border-bottom: 0;
  background: linear-gradient(#e2e2e2, #cfcfcf);
}
.tab.active { height: 22px; margin-bottom: -1px; color: #000; background: linear-gradient(#f4f4f4, #eaeaea); }

/* Project tree */
.tree-tools { height: 27px; padding: 0 2px 0 3px; background: #eaeaea; }
.push { margin-left: auto; }
.framed { margin-right: 1px; padding: 0 2px; border: 1px solid #2c5cd0; border-radius: 2px; background: #fff; }
.tree-gap { flex: none; height: 21px; background: #c2c2c2; }
.tree-area { display: flex; flex: 1; min-height: 0; overflow: hidden; }
.tree { flex: 1; margin: 0; padding: 0; list-style: none; background: #efefef; overflow: hidden; }
.tree li { display: flex; height: 19px; padding-right: 20px; border-bottom: 1px solid #fff; background: linear-gradient(#fff, #fff) right / 1px 100% no-repeat; }
.tree li > span { display: flex; align-items: center; flex: 1; border-right: 1px solid #c8c8c8; white-space: nowrap; }
.tree li > span > svg { margin-right: 4px; }
.tree b { width: 16px; padding-left: 2px; }
.tree b svg { width: 8px; height: 8px; }
.tree .l0 > span { padding-left: 3px; }
.tree .l1 > span { padding-left: 21px; }
.tree .l2 > span { padding-left: 39px; }
.tree .l3 > span { padding-left: 57px; }
.tree .shade { background-color: #e1e1e1; }
.tree .strong { font-family: "Open Sans", "Noto Sans CJK SC", sans-serif; font-weight: 600; }
.tree .selected { background-color: #d8dee2; }
.tree .selected > span { background: #d0d6da; outline: 1px dashed #888; outline-offset: -1px; }

.details { display: flex; flex: none; height: 24px; border-top: 3px solid #1c2133; background: linear-gradient(#f0f0f0, #d6d6d6); }
.details button { display: flex; align-items: center; justify-content: center; width: 21px; padding-right: 4px; border-right: 1px solid #888; }
.details button svg { width: 10px; height: 10px; }
.details h2 { padding-left: 4px; }

/* Scroll bars */
.scroll { display: flex; flex: none; background: #c2c2c2; }
.scroll.v { flex-direction: column; width: 18px; }
.scroll.hz { height: 18px; }
.scroll button, .thumb { display: flex; align-items: center; justify-content: center; border: 1px solid #8a8a8a; box-shadow: inset 0 0 0 1px #fff; background: linear-gradient(#ececec, #d8d8d8); }
.scroll button { flex: none; width: 18px; height: 18px; }
.scroll .mid { color: #505050; }
.scroll button svg { width: 10px; height: 10px; }
.thumb svg { width: 8px; height: 8px; }
.track { flex: 1; min-width: 0; min-height: 0; }
.v .track { padding: 1px 0; }
.hz .track { padding: 0 2px; }
.v .thumb { height: 46%; }
.hz .thumb { height: 100%; }

/* Format toolbar */
.format { height: 27px; padding-left: 5px; background: #eaeaea; overflow: hidden; }
.format .sep { width: 5px; height: 25px; }
.combo { position: relative; display: flex; flex: none; height: 18px; border: 1px solid #8a8a8a; background: #fff; }
.combo input, .combo select { flex: 1; min-width: 0; width: 100%; appearance: none; }
.combo button, .drop { display: flex; align-items: center; justify-content: center; flex: none; width: 16px; border-left: 1px solid #8a8a8a; background: linear-gradient(#fafafa, #d8d8d8); }
.drop { pointer-events: none; }
.drop svg { width: 8px; height: 8px; }
.font-combo { width: 113px; margin-right: 8px; }
.size-combo { width: 38px; margin-right: 6px; }
.size-combo select { padding-left: 3px; }
.letter { display: flex; justify-content: center; flex: none; width: 24px; font: 700 16px/20px "Open Sans", sans-serif; color: #10124e; }
.italic { font-family: "Liberation Serif", serif; font-style: italic; font-size: 18px; }
.strike { text-decoration: line-through; font-weight: 600; }
.fmt { display: flex; align-items: center; flex: none; gap: 3px; width: 35px; padding-left: 2px; }
.grow { width: 16px; font: 700 15px/20px "Open Sans", sans-serif; color: #10124e; text-align: left; }
.grow sup { font-size: 9px; line-height: 1px; }
.faint { color: #888; }
.more { height: 20px; padding: 0 0 8px; }
.more svg { width: 9px; height: 9px; }

/* Screen canvas */
.canvas-area { display: flex; flex: 1; min-height: 0; background: #c2c2c2; }
.canvas { display: flex; flex: 1; min-width: 0; overflow: hidden; }
.band { flex: none; }
.band-gray { width: 52px; background: #787878; }
.band-blue { width: 21px; background: #718699; border-right: 1px solid #1c3144; }
.band-black { width: 65px; background: #000; }
.sheet {
  position: relative;
  flex: 1;
  background-image: linear-gradient(90deg, transparent 1px, #b4b4b4 1px), linear-gradient(#000 1px, #b4b4b4 1px);
  background-size: 8px 8px;
}
.hmi-btn { position: absolute; width: 96px; height: 33px; border: 2px solid; border-color: #e6e6e6 #6a6a6a #6a6a6a #e6e6e6; background: #ccc; font-size: 17px; line-height: 28px; }
.start { left: 146px; top: 10px; }
.halt { left: 351px; top: 10px; }
.spray { left: 255px; top: 82px; }
.h { position: absolute; width: 6px; height: 6px; border: 1px solid #2a68d4; background: #bfe2ff; }
.nw, .n, .ne { top: -2px; }
.w, .e { top: 11px; }
.sw, .s, .se { bottom: -2px; }
.nw, .w, .sw { left: -2px; }
.n, .s { left: 43px; }
.ne, .e, .se { right: -2px; }
.canvas-scroll { width: 17px; }
.canvas-scroll button { width: 17px; }
.canvas-scroll .track { display: flex; align-items: center; padding: 8px 0 0; }
.canvas-scroll .thumb { width: 17px; height: 22px; }

.canvas-foot { display: flex; flex: none; height: 18px; background: #eaeaea; }
.canvas-foot .hz { flex: 1; min-width: 0; }
.canvas-foot .thumb { width: 66%; }
.zoom-combo { width: 156px; margin-left: 6px; }
.zoom-combo select { padding-left: 3px; }
.zoom-slide { width: 68px; margin: 0 14px 0 18px; }
.zoom-slide input { display: block; width: 100%; height: 12px; appearance: none; background: linear-gradient(#666, #666) 0 6px / 100% 1px no-repeat; }
.zoom-slide input::-webkit-slider-thumb { appearance: none; width: 8px; height: 9px; border: 1px solid #888; border-radius: 1px 1px 4px 4px; background: #ddd; }
.ticks { height: 3px; background: repeating-linear-gradient(90deg, #222 0 1px, transparent 1px 5px); }
.overview { width: 17px; background: #fff; }

/* Inspector */
.head-tabs { display: flex; align-self: flex-end; gap: 2px; margin-left: auto; }
.head-tab { display: flex; align-items: center; gap: 3px; width: 74px; height: 21px; padding-left: 2px; border: 1px solid #777; border-bottom: 0; background: linear-gradient(#e0e0e0, #ccc); color: #555; font-size: 15px; line-height: 18px; font-weight: 700; }
.head-tab.active { color: #000; background: #eee; border-color: #eee #777 #eee #eee; }
.prop-tools { height: 33px; padding-left: 3px; background: #eaeaea; }
.prop-tools .labelled { padding-right: 6px; }
.grid-area { display: flex; flex: 1; min-height: 0; padding: 0 2px 1px 1px; background: #eaeaea; }
.grid-main { display: flex; flex-direction: column; flex: 1; min-width: 0; }
.grid-clip { flex: 1; min-height: 0; overflow: hidden; }
.props { width: 100%; table-layout: fixed; border-collapse: separate; border-spacing: 0; }
.c-gut { width: 24px; }
.c-name { width: 180px; }
.c-stat { width: 120px; }
.c-end { width: 11px; }
.props th { height: 20px; padding: 0 3px; border-top: 1px solid #b0b0b0; border-bottom: 1px solid #fff; border-right: 1px solid #b0b0b0; background: linear-gradient(#eee, #dcdcdc 45%, #ccc 50%, #dedede); font-weight: 400; line-height: 17px; text-align: left; white-space: nowrap; }
.props th svg { display: inline-block; width: 8px; height: 8px; margin-left: 4px; vertical-align: middle; }
.props td { height: 19px; padding: 1px 3px 0; border-right: 1px solid #fff; border-bottom: 1px solid #fff; background: #e1e1e1; line-height: 17px; white-space: nowrap; }
.props td:first-child { background: #ccc; border-right: 1px solid #b0b0b0; }
.props td:nth-child(2) { padding-left: 40px; border-right-color: #c8c8c8; }
.props td:nth-child(3), .props td:last-child { background: #efefef; }
.props td:last-child { border-right: 0; }
.props .group td { background: #d9d9d9; }
.props .group td:first-child { background: #ccc; }
.props .group td:last-child { background: #efefef; }
.props .group td:nth-child(2) { padding-left: 5px; }
.props .group td:nth-child(3) { border-right-color: #d9d9d9; }
.props .group svg { display: inline-block; width: 8px; height: 8px; margin-right: 9px; vertical-align: 1px; }
.props .muted { color: #888; }
.grid-hz { padding-left: 24px; background: linear-gradient(#ccc, #ccc) 0 0 / 23px 100% no-repeat #c2c2c2; }
.grid-hz .thumb { width: 100%; }
.grid-side { display: flex; flex-direction: column; flex: none; width: 18px; }
.cap { flex: none; height: 20px; border-top: 1px solid #b0b0b0; border-bottom: 1px solid #fff; background: linear-gradient(#eee, #dcdcdc 45%, #ccc 50%, #dedede); }
.grid-side .scroll { flex: 1; min-height: 0; }
.grid-side .thumb { height: 41%; }
.corner { flex: none; height: 18px; background: #c2c2c2; }

/* Forum watermark */
.watermark { position: absolute; left: 394px; top: 411px; transform: rotate(-30deg); transform-origin: 0 50%; color: #fff; opacity: .4; font-weight: 700; white-space: nowrap; pointer-events: none; }
.wm-name { font-size: 41px; line-height: 45px; }
.wm-site { font: 700 24px/26px "Liberation Sans", sans-serif; }
```
